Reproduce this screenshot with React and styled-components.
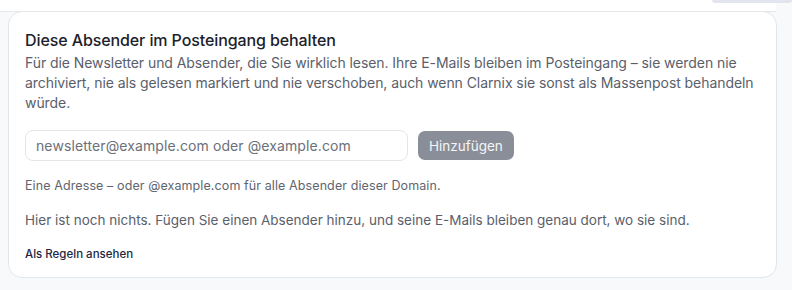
import React from "react";
import styled, { createGlobalStyle } from "styled-components";

const Global = createGlobalStyle`
  html, body { margin: 0; padding: 0; background: #f7f9fa; }
  body { font-family: Inter, "Noto Sans", sans-serif; }
`;

const Page = styled.div`
  width: 792px;
  height: 290px;
  overflow: hidden;
  background: #f7f9fa;
  display: flex;
  flex-direction: column;
`;

const TopStrip = styled.div`
  height: 11px;
  width: 776px;
  background: #ffffff;
  border-bottom: 1px solid #e6e8eb;
  position: relative;
`;

const TopTab = styled.div`
  position: absolute;
  right: -16px;
  top: 0;
  width: 80px;
  height: 3px;
  background: #e3e5ee;
  border-radius: 0 0 4px 4px;
`;

const Card = styled.section`
  margin: -1px 0 0 8px;
  width: 769px;
  height: 267px;
  box-sizing: border-box;
  background: #ffffff;
  border: 1px solid #e3e6e9;
  border-radius: 14px;
  padding: 17px 16px 0 16px;
  display: flex;
  flex-direction: column;
`;

const Title = styled.h2`
  margin: 0;
  font-size: 16px;
  line-height: 22px;
  font-weight: 500;
  letter-spacing: -0.1px;
  color: #1c212b;
`;

const Description = styled.p`
  margin: 2px 0 0 0;
  font-size: 14px;
  line-height: 20px;
  letter-spacing: -0.07px;
  color: #5a606b;
`;

const AddRow = styled.div`
  display: flex;
  align-items: center;
  gap: 10px;
  margin-top: 17px;
`;

const Input = styled.input`
  width: 383px;
  height: 31px;
  box-sizing: border-box;
  border: 1px solid #e3e5e8;
  border-radius: 8px;
  padding: 0 10px;
  font-family: inherit;
  font-size: 14px;
  letter-spacing: 0.1px;
  color: #1c212b;
  outline: none;
  &::placeholder { color: #6b7079; }
`;

const AddButton = styled.button`
  height: 29px;
  padding: 0 11px;
  border: none;
  border-radius: 7px;
  background: #8a8e98;
  color: #f4f5f7;
  font-family: inherit;
  font-size: 13.5px;
`;

const Hint = styled.p`
  margin: 16px 0 0 0;
  font-size: 12.5px;
  line-height: 17px;
  letter-spacing: 0.1px;
  color: #5f6570;
`;

const Empty = styled.p`
  margin: 16px 0 0 0;
  font-size: 13.5px;
  line-height: 20px;
  color: #5a606b;
`;

const RulesLink = styled.a`
  margin-top: 16px;
  font-size: 11.5px;
  line-height: 16px;
  font-weight: 500;
  color: #1d2540;
  text-decoration: none;
  align-self: flex-start;
`;

export default function App() {
  return (
    <Page>
      <Global />
      <TopStrip>
        <TopTab />
      </TopStrip>
      <Card>
        <Title>Diese Absender im Posteingang behalten</Title>
        <Description>
          Für die Newsletter und Absender, die Sie wirklich lesen. Ihre E-Mails bleiben im Posteingang – sie werden nie
          archiviert, nie als gelesen markiert und nie verschoben, auch wenn Clarnix sie sonst als Massenpost behandeln
          würde.
        </Description>
        <AddRow>
          <Input placeholder="newsletter@example.com oder @example.com" />
          <AddButton>Hinzufügen</AddButton>
        </AddRow>
        <Hint>Eine Adresse – oder @example.com für alle Absender dieser Domain.</Hint>
        <Empty>
          Hier ist noch nichts. Fügen Sie einen Absender hinzu, und seine E-Mails bleiben genau dort, wo sie sind.
        </Empty>
        <RulesLink href="#">Als Regeln ansehen</RulesLink>
      </Card>
    </Page>
  );
}
